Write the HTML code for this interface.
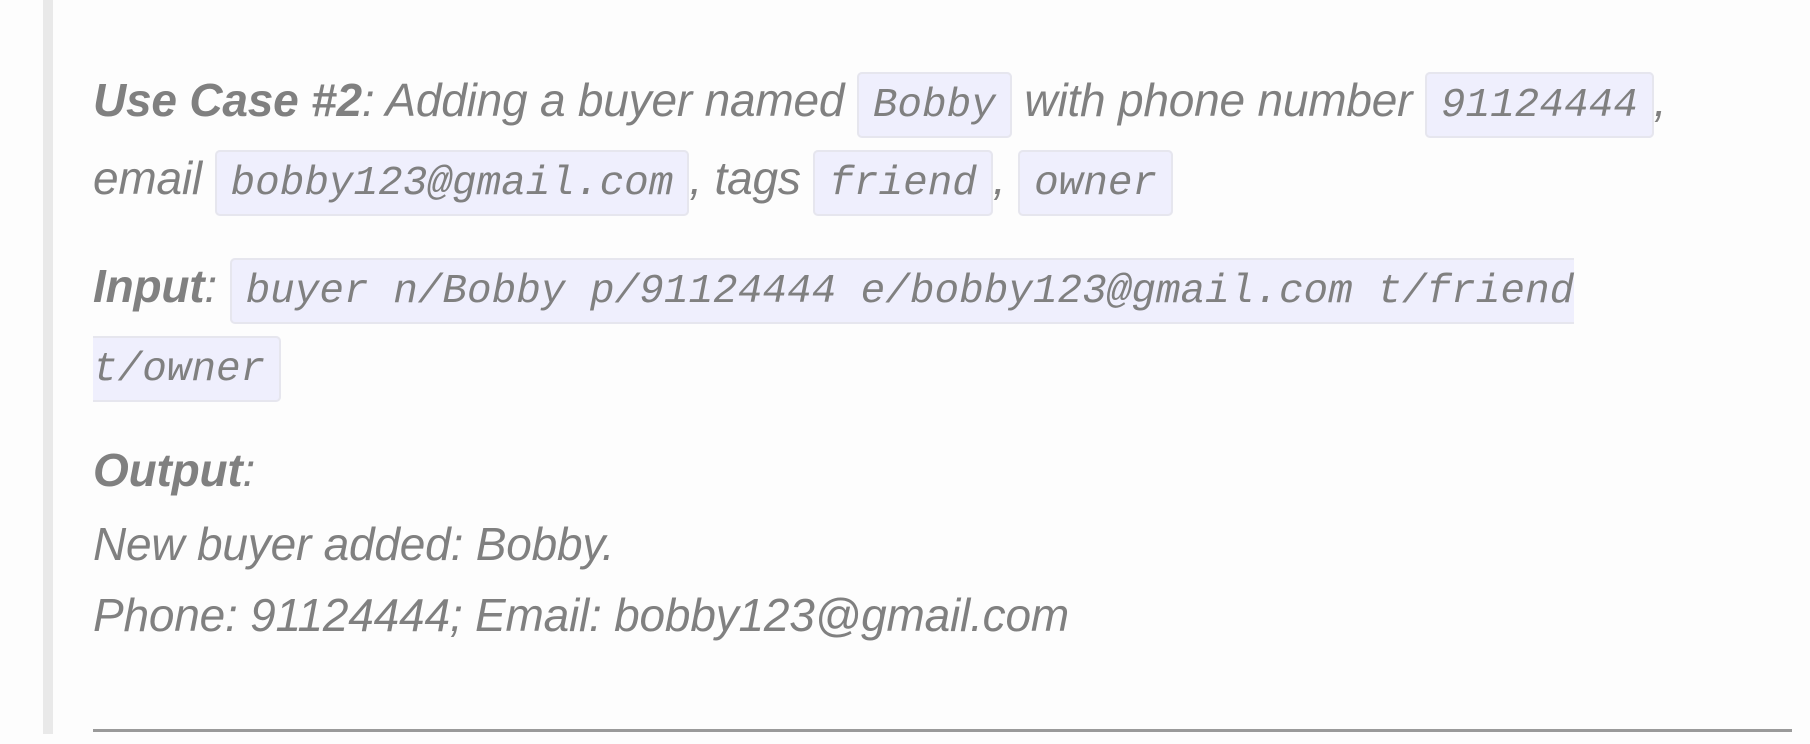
<!DOCTYPE html>
<html><head><meta charset="utf-8"><style>
html,body{margin:0;padding:0;background:#fdfdfd;}
body{width:1810px;height:744px;overflow:hidden;position:relative;}
.bar{position:absolute;left:43px;top:0;width:10px;height:734px;background:#e9e9e9;}
.c{position:absolute;left:93px;top:0;width:1700px;font-family:"Liberation Sans",sans-serif;font-style:italic;font-size:46px;color:#808080;letter-spacing:-0.2px;}
p{margin:0;line-height:72px;}
b{font-weight:bold;}
code{font-family:"Liberation Mono",monospace;font-size:41px;font-style:italic;background:#efeffd;border:2px solid #e6e6ee;border-radius:5px;padding:9px 14px 7px;letter-spacing:0;}
.hr{position:absolute;left:93px;top:729px;width:1699px;height:3px;background:#9a9a9a;}
</style></head><body>
<div class="bar"></div>
<div class="c">
<p style="position:absolute;top:64px;white-space:nowrap"><b>Use Case #2</b>: Adding a buyer named <code>Bobby</code> with phone number <code>91124444</code>,<br>email <code>bobby123@gmail.com</code>, tags <code>friend</code>, <code>owner</code></p>
<p style="position:absolute;top:250px;white-space:nowrap"><b>Input</b>: <code>buyer n/Bobby p/91124444 e/bobby123@gmail.com t/friend<br>t/owner</code></p>
<p style="position:absolute;top:434px;white-space:nowrap"><b>Output</b>:</p>
<p style="position:absolute;top:508px;white-space:nowrap">New buyer added: Bobby.</p>
<p style="position:absolute;top:579px;white-space:nowrap">Phone: 91124444; Email: bobby123@gmail.com</p>
</div>
<div class="hr"></div>
</body></html>
